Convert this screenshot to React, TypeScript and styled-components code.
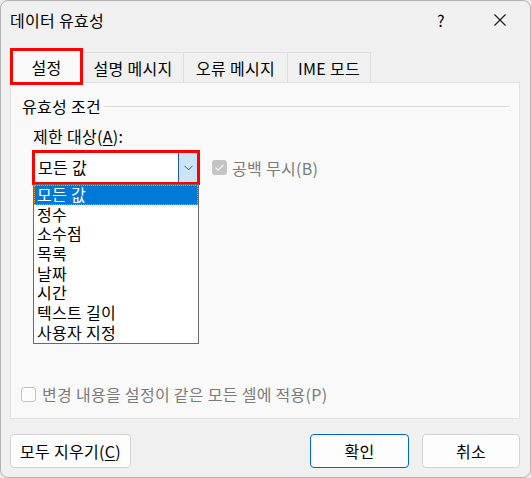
import React from "react";
import styled, { createGlobalStyle } from "styled-components";

const Global = createGlobalStyle`
  html, body { margin: 0; padding: 0; background: #ececec; }
  body {
    font-family: "Noto Sans CJK KR", "Noto Sans", sans-serif;
    font-size: 16px;
    letter-spacing: 0.3px;
    color: #000;
  }
  * { box-sizing: border-box; }
`;

const Window = styled.div`
  width: 531px;
  height: 478px;
  background: #f0f0f0;
  border: 1px solid #b3b3b3;
  border-radius: 8px;
  display: flex;
  flex-direction: column;
  overflow: hidden;
`;

const TitleBar = styled.div`
  height: 38px;
  display: flex;
  align-items: center;
  padding: 0 7px 0 9px;
`;

const Title = styled.div`
  flex: 1;
  line-height: 20px;
`;

const CaptionButton = styled.div<{ $gap?: number }>`
  width: 46px;
  height: 38px;
  margin-right: ${(p) => p.$gap ?? 0}px;
  display: flex;
  align-items: center;
  justify-content: center;
  font-size: 16px;
  line-height: 20px;
`;

const TabRow = styled.div`
  margin-top: 9px;
  height: 34px;
  padding-left: 9px;
  display: flex;
  align-items: flex-end;
`;

const Tab = styled.div<{ $w: number; $active?: boolean }>`
  width: ${(p) => p.$w}px;
  display: flex;
  align-items: center;
  justify-content: center;
  line-height: 20px;
  white-space: nowrap;
  ${(p) =>
    p.$active
      ? `
    height: 37px;
    margin-bottom: -3px;
    background: #f9f9f9;
    border: 3px solid #ff0000;
    position: relative;
    z-index: 2;
  `
      : `
    height: 30px;
    background: #f0f0f0;
    border: 1px solid #dedede;
    border-bottom: none;
    border-left: none;
  `}
`;

const Panel = styled.div`
  margin: 0 10px 0 9px;
  height: 337px;
  background: #f9f9f9;
  border: 1px solid #e1e1e1;
  display: flex;
  flex-direction: column;
`;

const GroupHeader = styled.div`
  margin-top: 13px;
  padding: 0 9px 0 11px;
  display: flex;
  align-items: center;
  gap: 3px;
  line-height: 20px;
`;

const GroupLine = styled.div`
  flex: 1;
  height: 1px;
  background: #dcdcdc;
`;

const FieldLabel = styled.div`
  margin-top: 10px;
  padding-left: 22px;
  line-height: 20px;
`;

const Mnemonic = styled.span`
  text-decoration: underline;
  text-underline-offset: 2px;
`;

const ComboRow = styled.div`
  margin-top: 4px;
  padding-left: 21px;
  display: flex;
  align-items: center;
`;

const ComboFrame = styled.div`
  position: relative;
  width: 168px;
  height: 35px;
  border: 3px solid #ff0000;
  background: #fff;
  display: flex;
`;

const ComboText = styled.div`
  flex: 1;
  padding-left: 3px;
  line-height: 29px;
`;

const ComboButton = styled.div`
  width: 19px;
  background: #cce4f7;
  border-left: 1px solid #1f5fa8;
  display: flex;
  align-items: center;
  justify-content: center;
`;

const DropList = styled.div`
  position: absolute;
  top: 31px;
  left: -2px;
  width: 166px;
  background: #fff;
  border: 1px solid #6b6b6b;
  z-index: 3;
`;

const ListItem = styled.div<{ $selected?: boolean }>`
  height: 19.7px;
  line-height: 19.7px;
  padding-left: 3px;
  white-space: nowrap;
  ${(p) =>
    p.$selected
      ? `
    background: #0078d7;
    color: #fff;
    outline: 1px dotted #e8a040;
    outline-offset: -1px;
  `
      : ``}
`;

const CheckLine = styled.div<{ $indent: number }>`
  display: flex;
  align-items: center;
  gap: 5px;
  margin-left: ${(p) => p.$indent}px;
  color: #7b7b7b;
  line-height: 20px;
  white-space: nowrap;
`;

const Box = styled.div<{ $checked?: boolean }>`
  width: 15px;
  height: 15px;
  border-radius: 3px;
  display: flex;
  align-items: center;
  justify-content: center;
  ${(p) =>
    p.$checked
      ? `background: #c4c4c4;`
      : `background: #fdfdfd; border: 1px solid #c2c2c2;`}
`;

const BottomCheck = styled(CheckLine)`
  margin-top: auto;
  margin-bottom: 14px;
  gap: 6px;
`;

const Footer = styled.div`
  margin-top: 15px;
  height: 34px;
  padding: 0 10px 0 9px;
  display: flex;
`;

const Spacer = styled.div`
  flex: 1;
`;

const Button = styled.div<{ $w: number; $primary?: boolean; $gap?: number }>`
  width: ${(p) => p.$w}px;
  height: 34px;
  margin-left: ${(p) => p.$gap ?? 0}px;
  background: #fdfdfd;
  border: 1px solid ${(p) => (p.$primary ? "#0067c0" : "#d3d3d3")};
  border-radius: 4px;
  display: flex;
  align-items: center;
  justify-content: center;
  line-height: 20px;
  white-space: nowrap;
`;

const items = ["모든 값", "정수", "소수점", "목록", "날짜", "시간", "텍스트 길이", "사용자 지정"];

const CheckMark = () => (
  <svg width="11" height="9" viewBox="0 0 11 9">
    <path d="M1.5 4.5 L4.2 7.2 L9.5 1.8" fill="none" stroke="#f4f4f4" strokeWidth="1.3" />
  </svg>
);

export default function App() {
  return (
    <>
      <Global />
      <Window>
        <TitleBar>
          <Title>데이터 유효성</Title>
          <CaptionButton $gap={13}>?</CaptionButton>
          <CaptionButton>
            <svg width="12" height="12" viewBox="0 0 12 12">
              <path d="M0.5 0.5 L11.5 11.5 M11.5 0.5 L0.5 11.5" stroke="#1a1a1a" strokeWidth="1.1" />
            </svg>
          </CaptionButton>
        </TitleBar>

        <TabRow>
          <Tab $w={73} $active>설정</Tab>
          <Tab $w={101}>설명 메시지</Tab>
          <Tab $w={104}>오류 메시지</Tab>
          <Tab $w={83}>IME 모드</Tab>
        </TabRow>

        <Panel>
          <GroupHeader>
            <span>유효성 조건</span>
            <GroupLine />
          </GroupHeader>
          <FieldLabel>
            제한 대상(<Mnemonic>A</Mnemonic>):
          </FieldLabel>
          <ComboRow>
            <ComboFrame>
              <ComboText>모든 값</ComboText>
              <ComboButton>
                <svg width="9" height="6" viewBox="0 0 9 6">
                  <path d="M0.5 0.8 L4.5 4.8 L8.5 0.8" fill="none" stroke="#555" strokeWidth="1" />
                </svg>
              </ComboButton>
              <DropList>
                {items.map((t, i) => (
                  <ListItem key={t} $selected={i === 0}>
                    {t}
                  </ListItem>
                ))}
              </DropList>
            </ComboFrame>
            <CheckLine $indent={12}>
              <Box $checked>
                <CheckMark />
              </Box>
              <span>공백 무시(B)</span>
            </CheckLine>
          </ComboRow>
          <BottomCheck $indent={10}>
            <Box />
            <span>변경 내용을 설정이 같은 모든 셀에 적용(P)</span>
          </BottomCheck>
        </Panel>

        <Footer>
          <Button $w={121}>
            모두 지우기(<Mnemonic>C</Mnemonic>)
          </Button>
          <Spacer />
          <Button $w={99} $primary>
            확인
          </Button>
          <Button $w={98} $gap={13}>
            취소
          </Button>
        </Footer>
      </Window>
    </>
  );
}
